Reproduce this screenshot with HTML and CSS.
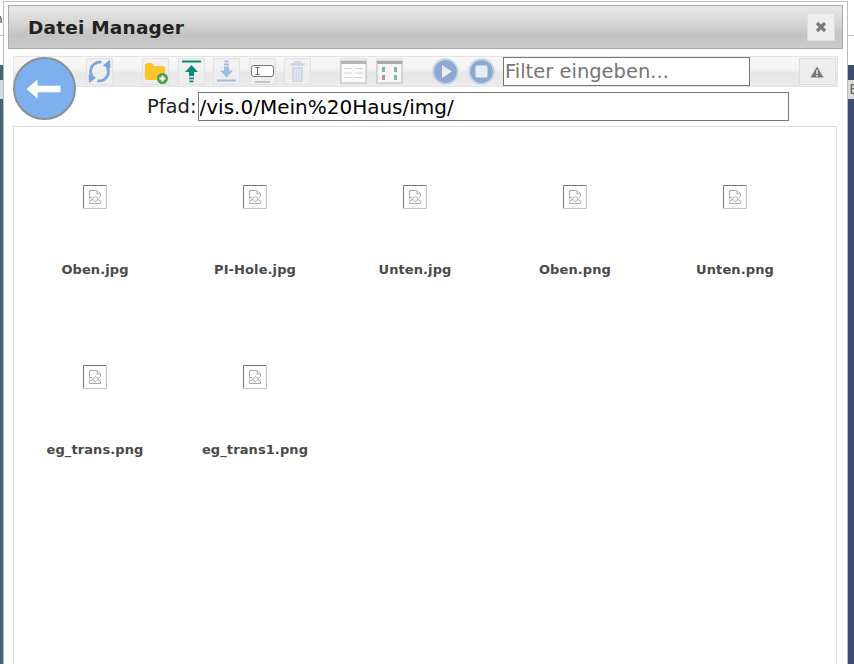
FILE: index.html
```html
<!DOCTYPE html>
<html lang="de">
<head>
<meta charset="utf-8">
<title>Datei Manager</title>
<link rel="stylesheet" href="styles.css">
</head>
<body>
<div class="backdrop">
  <div class="page-top"><span class="page-glyph">n</span></div>
  <div class="page-sub"></div>
  <div class="page-dark"><div class="page-strip">E</div></div>
</div>
<section class="dialog">
  <header class="titlebar">
    <h1 class="title">Datei Manager</h1>
    <button class="close" aria-label="Schließen"><svg width="12" height="12" viewBox="0 0 12 12"><path d="M2 2l8 8M10 2l-8 8" stroke="#7a7a7a" stroke-width="3.200"/></svg></button>
  </header>
  <div class="body">
    <button class="back" aria-label="Zurück"><svg width="38" height="22" viewBox="0 0 40 24"><path d="M1 12L13 1.500V8.500H38V15.500H13V22.500Z" fill="#fff"/></svg></button>
    <div class="toolbar">
      <div class="group">
        <button class="tool"><svg width="27" height="27" viewBox="0 0 27 27" fill="none" stroke="#7aa6dc" stroke-width="2.800"><path d="M6 18.500A9.500 9.500 0 0 1 15.500 4.200"/><path d="M21 8.500A9.500 9.500 0 0 1 11.500 22.800"/><path d="M17.500 7.500L23.500 2.500 24 10Z" fill="#7aa6dc" stroke-width="1"/><path d="M9.500 19.500L3.500 24.500 3 17Z" fill="#7aa6dc" stroke-width="1"/></svg></button>
      </div>
      <div class="group">
        <button class="tool"><svg width="27" height="27" viewBox="0 0 27 27"><path d="M3 7.500Q3 5 5 5H10L12.500 8H21Q23 8 23 10V22H5Q3 22 3 20Z" fill="#fcc52c"/><circle cx="20.500" cy="20.500" r="5.500" fill="#4f9c4a"/><path d="M20.500 17.500v6M17.500 20.500h6" stroke="#fff" stroke-width="2"/></svg></button>
        <button class="tool"><svg width="27" height="27" viewBox="0 0 27 27" fill="#0d8a76"><rect x="4" y="2.500" width="19" height="2"/><path d="M13.500 7L20 14H16V18H11V14H7Z"/><rect x="11" y="19.500" width="5" height="1.800"/><rect x="11.500" y="22.500" width="4" height="1.800"/></svg></button>
        <button class="tool"><svg width="27" height="27" viewBox="0 0 27 27" fill="#9dbde3"><rect x="11.500" y="2.500" width="4" height="1.800"/><rect x="11" y="5.500" width="5" height="1.800"/><path d="M11 8.500H16V12.500H20L13.500 19.500 7 12.500H11Z"/><rect x="4" y="21.500" width="19" height="2"/></svg></button>
        <button class="tool"><svg width="27" height="27" viewBox="0 0 27 27" fill="none"><rect x="2.500" y="7.500" width="22" height="11" rx="2.500" fill="#fff" stroke="#777"/><path d="M6.500 9.500h4M6.500 16.500h4M8.500 9.500v7" stroke="#666"/><path d="M6 24h15" stroke="#c4c4c4" stroke-width="2"/></svg></button>
        <button class="tool"><svg width="27" height="27" viewBox="0 0 27 27" fill="#cfd9e6"><rect x="10" y="3" width="7" height="2"/><rect x="6.500" y="5" width="14" height="3"/><path d="M8 9H19V24H8Z"/><path d="M11 10.500v12M13.500 10.500v12M16 10.500v12" stroke="#e6ebf1"/></svg></button>
      </div>
      <div class="group">
        <button class="tool"><svg width="27" height="27" viewBox="0 0 27 27"><rect x="1" y="3" width="25" height="22" fill="#fbfbfb" stroke="#bbb"/><rect x="1" y="3" width="25" height="3" fill="#b5b5b5"/><path d="M4 10.500h8M15 10.500h8M4 15h8M15 15h8M4 19.500h8M15 19.500h8" stroke="#d4d4d4"/></svg></button>
        <button class="tool"><svg width="27" height="27" viewBox="0 0 27 27"><rect x="1" y="3" width="25" height="22" fill="#f5f5f5" stroke="#bbb"/><rect x="1" y="3" width="25" height="3" fill="#aaa"/><g fill="#7fb5a8"><rect x="6" y="9" width="3" height="5"/><rect x="18" y="9" width="3" height="5"/><rect x="18" y="17" width="3" height="5"/></g><rect x="6" y="17" width="3" height="5" fill="#d98585"/></svg></button>
      </div>
      <div class="group">
        <button class="tool tool-round"><svg width="27" height="27" viewBox="0 0 27 27"><circle cx="13.500" cy="13.500" r="11.500" fill="#8ea9cf"/><circle cx="13.500" cy="13.500" r="12.500" fill="none" stroke="#c4d1e3" stroke-width="1.500"/><path d="M10 7L20 13.500 10 20Z" fill="#e8edf4"/></svg></button>
        <button class="tool tool-round"><svg width="27" height="27" viewBox="0 0 27 27"><circle cx="13.500" cy="13.500" r="11.500" fill="#8ea9cf"/><circle cx="13.500" cy="13.500" r="12.500" fill="none" stroke="#c4d1e3" stroke-width="1.500"/><rect x="7.500" y="7.500" width="12" height="12" rx="1.500" fill="#e8edf4"/></svg></button>
      </div>
      <input class="filter" type="text" placeholder="Filter eingeben...">
      <button class="warn" aria-label="Warnung"><svg width="14" height="12" viewBox="0 0 14 12"><path d="M7 .500L13.500 11.500H.5Z" fill="#777"/><path d="M7 4v4M7 9v1.500" stroke="#eee" stroke-width="1.500"/></svg></button>
    </div>
    <div class="pathrow">
      <label class="pathlabel" for="path">Pfad:</label>
      <input class="path" id="path" type="text" value="/vis.0/Mein%20Haus/img/">
    </div>
    <div class="files">
      <div class="file"><svg class="thumb" width="24" height="24" viewBox="0 0 24 24"><use href="#broken"/></svg><span class="name">Oben.jpg</span></div>
      <div class="file"><svg class="thumb" width="24" height="24" viewBox="0 0 24 24"><use href="#broken"/></svg><span class="name">PI-Hole.jpg</span></div>
      <div class="file"><svg class="thumb" width="24" height="24" viewBox="0 0 24 24"><use href="#broken"/></svg><span class="name">Unten.jpg</span></div>
      <div class="file"><svg class="thumb" width="24" height="24" viewBox="0 0 24 24"><use href="#broken"/></svg><span class="name">Oben.png</span></div>
      <div class="file"><svg class="thumb" width="24" height="24" viewBox="0 0 24 24"><use href="#broken"/></svg><span class="name">Unten.png</span></div>
      <div class="file"><svg class="thumb" width="24" height="24" viewBox="0 0 24 24"><use href="#broken"/></svg><span class="name">eg_trans.png</span></div>
      <div class="file"><svg class="thumb" width="24" height="24" viewBox="0 0 24 24"><use href="#broken"/></svg><span class="name">eg_trans1.png</span></div>
    </div>
  </div>
</section>
<svg class="defs" width="0" height="0" aria-hidden="true">
  <symbol id="broken" viewBox="0 0 24 24">
    <path d="M.5 24V.5H24" fill="none" stroke="#777"/>
    <path d="M23.500 0V23.500H0" fill="none" stroke="#c4c4c4"/>
    <path d="M6.500 13.500V5.500H14L17.500 9V11.500L15 13.500 12.500 11.500 10 13.500 8 12Z" fill="#fff" stroke="#aaa"/>
    <path d="M14 5.500V9H17.500" fill="none" stroke="#aaa"/>
    <path d="M6.500 16L9.500 14.500 12.500 16.500 15 14.500 17.500 16V18.500H6.500Z" fill="#fff" stroke="#aaa"/>
  </symbol>
</svg>
</body>
</html>
```
FILE: styles.css
```css
* { box-sizing: border-box; }
html, body { margin: 0; height: 100%; overflow: hidden; background: #fff; }
body { position: relative; font-family: "DejaVu Sans", sans-serif; }

.backdrop { height: 664px; display: flex; flex-direction: column; }
.page-top { height: 36px; border-bottom: 1px solid #bbb; font-size: 12px; color: #333; padding-top: 12px; }
.page-glyph { margin-left: -5px; }
.page-sub { height: 29px; background: #fff; }
.page-dark { flex: 1; background: linear-gradient(90deg, #45627f 0, #45627f 50%, #3e4d6f 100%); padding-top: 15px; }
.page-strip { height: 19px; background: #d9d9d9; color: #666; font-size: 14px; text-align: right; line-height: 19px; margin-right: -4px; }

.dialog { position: absolute; left: 3px; top: 1px; width: 845px; height: 760px; background: #fff; border: 1px solid #bdbdbd; padding: 3px 4px; }

.titlebar { height: 44px; display: flex; align-items: center; justify-content: space-between; padding: 0 7px 0 19px; border: 1px solid #aaa; background: linear-gradient(#e8e8e8 0, #d6d6d6 40%, #c3c3c3 70%, #cbcbcb 100%); }
.title { margin: 0; font-size: 18.500px; font-weight: 700; color: #222; letter-spacing: .2px; }
.close { width: 28px; height: 28px; padding: 0; border: 1px solid #ddd; background: #eee; display: flex; align-items: center; justify-content: center; }

.body { position: relative; padding: 7px 5px 0; }
.back { position: absolute; left: 5px; top: 8px; width: 63px; height: 63px; padding: 0 2px 0 0; border-radius: 50%; background: #7eb0ef; border: 2px solid #8b8f96; display: flex; align-items: center; justify-content: center; }

.toolbar { height: 31px; display: flex; align-items: center; padding: 0 2px 0 72px; gap: 29px; border: 1px solid #e4e4e4; background: linear-gradient(#f7f7f7 0, #f2f2f2 45%, #e6e6e6 55%, #ececec 100%); }
.group { display: flex; gap: 8.6px; flex: none; }
.tool { width: 27px; height: 27px; padding: 0; border: 0; background: rgba(240, 240, 240, .7); box-shadow: inset 0 0 0 1px #e2e2e2; display: block; }
.tool-round { background: transparent; box-shadow: none; }
.tool svg { display: block; }
.filter { flex: none; width: 247px; height: 29px; margin-left: -20.600px; padding: 0 1px; font: 19.500px "DejaVu Sans", sans-serif; color: #000; background: #fff; border: 1px solid #767676; border-radius: 0; outline: 0; }
.filter::placeholder { color: #757575; opacity: 1; }
.warn { flex: none; width: 37px; height: 27px; margin-left: 20px; padding: 0; border: 1px solid #ddd; background: #eee; display: flex; align-items: center; justify-content: center; }

.pathrow { display: flex; align-items: center; gap: 1px; height: 29px; margin-top: 5px; padding-left: 134px; }
.pathlabel { font-size: 19.500px; color: #222; }
.path { flex: none; width: 591px; height: 29px; padding: 0 1px; font: 20px "DejaVu Sans", sans-serif; color: #000; background: #fff; border: 1px solid #767676; border-radius: 0; outline: 0; }

.files { height: 620px; margin: 5px 1px 0 0; border: 1px solid #ddd; padding-left: 1px; display: grid; grid-template-columns: repeat(auto-fill, 160px); grid-auto-rows: 180px; align-content: start; }
.file { display: flex; flex-direction: column; align-items: center; padding-top: 58px; }
.thumb { display: block; }
.name { margin-top: 53px; font-size: 13px; font-weight: 700; color: #4a4a4a; line-height: 16px; letter-spacing: .1px; }
.defs { position: absolute; }
```
